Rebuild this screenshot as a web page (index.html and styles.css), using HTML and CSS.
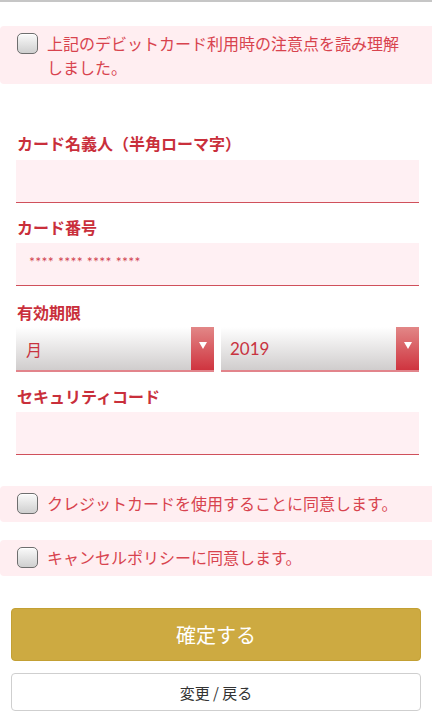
FILE: index.html
```html
<!DOCTYPE html>
<html lang="ja">
<head>
<meta charset="utf-8">
<title>カード情報入力</title>
<link rel="stylesheet" href="styles.css">
</head>
<body>
<div class="topline"></div>
<label class="agree agree-first">
  <span class="check"></span>
  <span class="agree-text">上記のデビットカード利用時の注意点を読み理解しました。</span>
</label>

<div class="form">
  <div class="field-label first">カード名義人（半角ローマ字）</div>
  <input class="text-input" type="text">

  <div class="field-label">カード番号</div>
  <input class="text-input" type="text" placeholder="**** **** **** ****">

  <div class="field-label expiry">有効期限</div>
  <div class="selects">
    <div class="select">
      <span class="select-value">月</span>
      <span class="select-arrow"><span class="tri"></span></span>
    </div>
    <div class="select">
      <span class="select-value num">2019</span>
      <span class="select-arrow"><span class="tri"></span></span>
    </div>
  </div>

  <div class="field-label">セキュリティコード</div>
  <input class="text-input" type="text">
</div>

<label class="agree agree-second">
  <span class="check"></span>
  <span class="agree-text">クレジットカードを使用することに同意します。</span>
</label>
<label class="agree agree-third">
  <span class="check"></span>
  <span class="agree-text">キャンセルポリシーに同意します。</span>
</label>

<div class="buttons">
  <button class="btn-primary" type="button">確定する</button>
  <button class="btn-secondary" type="button">変更 / 戻る</button>
</div>
</body>
</html>
```

FILE: styles.css
```css
html, body {
  margin: 0;
  padding: 0;
  background: #ffffff;
  overflow: hidden;
}
body {
  font-family: Lato, "Noto Sans CJK JP", sans-serif;
  width: 432px;
}
.topline {
  height: 2px;
  background: #c6c6c6;
}

.agree {
  display: flex;
  align-items: flex-start;
  gap: 9px;
  background: #ffeef1;
  border-radius: 4px 0 0 4px;
  padding: 6px 0 4px 17px;
  color: #d8434e;
  font-size: 16px;
  line-height: 24px;
}
.agree-first {
  margin-top: 24px;
}
.agree-first .agree-text {
  padding-right: 24px;
}
.agree-second {
  margin-top: 31px;
  padding-bottom: 6px;
}
.agree-third {
  margin-top: 18px;
  padding-bottom: 6px;
}
.check {
  flex: none;
  width: 19px;
  height: 19px;
  margin-top: 1px;
  border: 1px solid #6e6e6e;
  border-radius: 5px;
  background: linear-gradient(#fafafa, #cfcfcf);
  box-shadow: inset 0 1px 0 #ffffff;
}

.form {
  padding: 0 13px 0 16px;
}
.field-label {
  font-family: "Noto Sans CJK JP", sans-serif;
  font-weight: bold;
  font-size: 16px;
  line-height: 24px;
  color: #c92f3b;
  margin: 12px 0 4px 1px;
}
.field-label.first {
  margin-top: 47px;
  margin-bottom: 5px;
}
.field-label.expiry {
  margin-top: 14px;
  margin-bottom: 3px;
}
.text-input {
  display: block;
  box-sizing: border-box;
  width: 100%;
  height: 43px;
  margin: 0;
  border: 0;
  border-bottom: 1px solid #d0505b;
  background: #fff0f3;
  border-radius: 0;
  padding: 0 0 5px 13px;
  font-family: Lato, "Noto Sans CJK JP", sans-serif;
  font-size: 14px;
  color: #c92f3b;
  outline: none;
}
.text-input::placeholder {
  color: #d0414e;
  letter-spacing: 0.3px;
  opacity: 1;
}

.selects {
  display: grid;
  grid-template-columns: 1fr 1fr;
  gap: 7px;
}
.select {
  display: flex;
  height: 43px;
  border-bottom: 2px solid #e2848b;
  background: linear-gradient(#ffffff, #d0cdcd);
}
.select-value {
  flex: 1;
  display: flex;
  align-items: center;
  padding-left: 10px;
  font-family: "Noto Sans CJK JP", sans-serif;
  font-size: 16px;
  color: #c8333f;
}
.select-value.num {
  font-family: Lato, sans-serif;
  font-size: 17px;
  padding-left: 9px;
}
.select-arrow {
  flex: none;
  width: 23px;
  display: flex;
  justify-content: center;
  align-items: center;
  background: linear-gradient(#e28787, #cf343f);
}
.tri {
  width: 0;
  height: 0;
  border-left: 4px solid transparent;
  border-right: 4px solid transparent;
  border-top: 7px solid #ffffff;
  margin-bottom: 6px;
}

.buttons {
  display: flex;
  flex-direction: column;
  gap: 12px;
  padding: 32px 11px 0 11px;
}
.btn-primary {
  box-sizing: border-box;
  height: 53px;
  border: 1px solid #c3a034;
  border-radius: 4px;
  background: #cdaa41;
  color: #ffffff;
  font-family: "Noto Sans CJK JP", sans-serif;
  font-size: 20px;
  padding: 0;
}
.btn-secondary {
  box-sizing: border-box;
  height: 38px;
  border: 1px solid #cfcfcf;
  border-radius: 4px;
  background: #ffffff;
  color: #333333;
  font-family: "Noto Sans CJK JP", sans-serif;
  font-size: 15px;
  padding: 0;
}
```
